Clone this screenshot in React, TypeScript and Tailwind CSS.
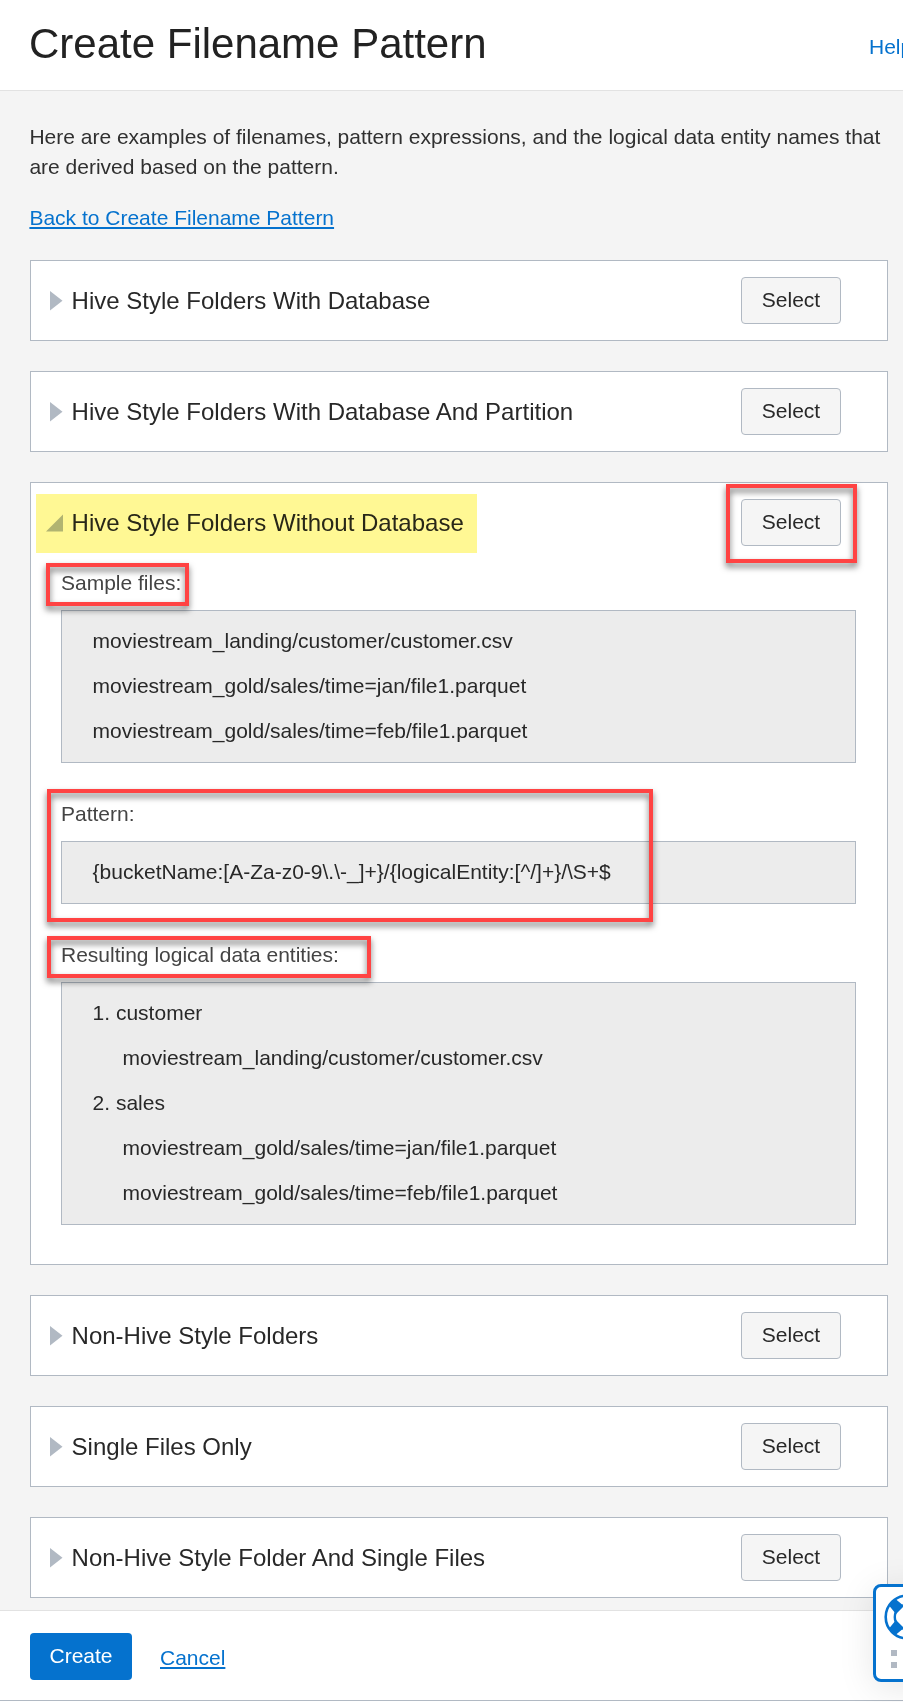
import React from "react";

const Arrow = ({ open = false }: { open?: boolean }) => (
  <svg width="20" height="22" viewBox="0 0 20 22" className="shrink-0">
    {open ? <path d="M1 19.5H18V2.5Z" fill="#b1b9c3" /> : <path d="M5 1V20.5L17.5 10.7Z" fill="#b1b9c3" />}
  </svg>
);

const Callout = ({ className }: { className: string }) => (
  <div
    className={`pointer-events-none absolute border-4 border-[#ff4343] drop-shadow-[0_4px_3px_rgba(0,0,0,0.55)] ${className}`}
  />
);

const Row = ({ title, open = false }: { title: string; open?: boolean }) => (
  <div className="flex h-[79px] items-center pr-[46px] pl-[14px]">
    <Arrow open={open} />
    <h2 className="ml-[6.6px] flex-1 text-[24px] leading-[30px] text-[#282828]">{title}</h2>
    <button className="h-[47px] w-[100px] rounded-[4px] border border-[#b1b9c3] bg-[#f5f5f5] pb-[2px] text-[21px] leading-[30px] text-[#282828]">
      Select
    </button>
  </div>
);

const Panel = ({ title, open = false, children }: { title: string; open?: boolean; children?: React.ReactNode }) => (
  <section className="relative border border-[#b1b9c3] bg-white">
    <Row title={title} open={open} />
    {children}
  </section>
);

const Box = ({ children }: { children: React.ReactNode }) => (
  <div className="mt-3 border border-[#b1b9c3] bg-[#ececec] pt-[7px] pb-[9px] pl-[30.6px] leading-[45px] text-[#282828]">
    {children}
  </div>
);

const Label = ({ children }: { children: React.ReactNode }) => <div className="text-[#444444]">{children}</div>;

export default function App() {
  return (
    <div className="relative flex h-[1702px] w-[903px] flex-col overflow-hidden bg-white font-['Liberation_Sans',Arial,sans-serif] text-[21px] leading-[30px]">
      <header className="flex h-[91px] shrink-0 items-start border-b border-[#e2e2e2] pl-[29px]">
        <h1 className="w-[840px] shrink-0 pt-[19px] text-[42px] leading-[50px] text-[#222222]">Create Filename Pattern</h1>
        <a className="shrink-0 pt-[32px] text-[#0572ce]">Help</a>
      </header>

      <main className="h-[1519px] shrink-0 overflow-hidden bg-[#f4f4f4] pt-[31px] pr-[15px] pl-[30px]">
        <p className="-ml-[0.6px] whitespace-nowrap text-[#303030]">
          Here are examples of filenames, pattern expressions, and the logical data entity names that
          <br />
          are derived based on the pattern.
        </p>
        <a className="mt-[21px] -ml-[0.6px] block text-[#0572ce] underline decoration-2 underline-offset-[2px]">
          Back to Create Filename Pattern
        </a>

        <div className="mt-[27px] flex flex-col gap-[30px]">
          <Panel title="Hive Style Folders With Database" />
          <Panel title="Hive Style Folders With Database And Partition" />
          <Panel title="Hive Style Folders Without Database" open>
            <div className="pt-[6px] pr-[31px] pb-[39px] pl-[30px]">
              <Label>Sample files:</Label>
              <Box>
                <div>moviestream_landing/customer/customer.csv</div>
                <div>moviestream_gold/sales/time=jan/file1.parquet</div>
                <div>moviestream_gold/sales/time=feb/file1.parquet</div>
              </Box>
              <div className="h-9" />
              <Label>Pattern:</Label>
              <Box>{"{bucketName:[A-Za-z0-9\\.\\-_]+}/{logicalEntity:[^/]+}/\\S+$"}</Box>
              <div className="h-9" />
              <Label>Resulting logical data entities:</Label>
              <Box>
                <div>1. customer</div>
                <div className="pl-[30px]">moviestream_landing/customer/customer.csv</div>
                <div>2. sales</div>
                <div className="pl-[30px]">moviestream_gold/sales/time=jan/file1.parquet</div>
                <div className="pl-[30px]">moviestream_gold/sales/time=feb/file1.parquet</div>
              </Box>
            </div>
            <div className="pointer-events-none absolute top-[11px] left-[5px] h-[59px] w-[441px] bg-[#fff894] mix-blend-multiply" />
            <Callout className="top-[1px] left-[695px] h-[79px] w-[131px]" />
            <Callout className="top-[80px] left-[15px] h-[43px] w-[143px]" />
            <Callout className="top-[306px] left-[16px] h-[133px] w-[606px]" />
            <Callout className="top-[453px] left-[16px] h-[42px] w-[324px]" />
          </Panel>
          <Panel title="Non-Hive Style Folders" />
          <Panel title="Single Files Only" />
          <Panel title="Non-Hive Style Folder And Single Files" />
        </div>
      </main>

      <footer className="flex h-[91px] shrink-0 items-start border-t border-b border-t-[#e2e2e2] border-b-[#b1b9c3] bg-white pt-[22px] pl-[30px]">
        <button className="h-[47px] w-[102px] rounded-[4px] bg-[#0572ce] pb-[2px] text-white">Create</button>
        <a className="mt-[10px] ml-[28px] text-[#0572ce] underline decoration-2 underline-offset-[2px]">Cancel</a>
      </footer>

      <div className="absolute top-[1584px] left-[873px] h-[98px] w-[70px] rounded-[8px] border-[3px] border-[#0572ce] bg-white shadow-[0_6px_36px_rgba(0,0,0,0.1)]">
        <svg width="46" height="46" viewBox="0 0 46 46" className="mt-[7px] ml-[8px]" fill="none" stroke="#0572ce">
          <path
            d="M5 11.5L11.5 5L20 12L12 20ZM34.5 5L41 11.5L34 20L26 12ZM5 34.5L12 26L20 34L11.5 41ZM41 34.5L34 26L26 34L34.5 41Z"
            fill="#0572ce"
            stroke="none"
          />
          <circle cx="23" cy="23" r="21.3" strokeWidth="2.6" />
          <circle cx="23" cy="23" r="12.2" strokeWidth="2.4" />
        </svg>
        <div className="mt-[10px] ml-[15px] grid w-[18px] grid-cols-2 gap-[6px]">
          <i className="size-[6px] bg-[#b1b9c3]" />
          <i className="size-[6px] bg-[#b1b9c3]" />
          <i className="size-[6px] bg-[#b1b9c3]" />
          <i className="size-[6px] bg-[#b1b9c3]" />
        </div>
      </div>
    </div>
  );
}
